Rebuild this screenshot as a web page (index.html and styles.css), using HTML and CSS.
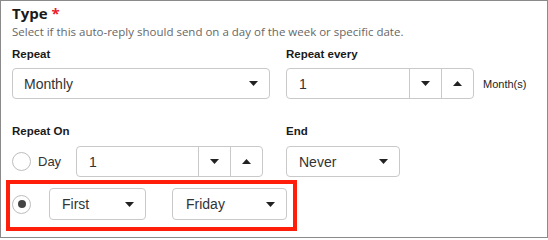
FILE: index.html
```html
<!DOCTYPE html>
<html>
<head>
<meta charset="utf-8">
<link rel="stylesheet" href="styles.css">
</head>
<body>
<div class="frame">
  <div class="title">Type <span class="req">*</span></div>
  <div class="desc">Select if this auto-reply should send on a day of the week or specific date.</div>

  <div class="grid row1">
    <div class="field">
      <div class="label">Repeat</div>
      <div class="select w-full"><span>Monthly</span><svg class="caret" width="9" height="5" viewBox="0 0 9 5"><path d="M0 0H9L4.5 5Z"/></svg></div>
    </div>
    <div class="field">
      <div class="label">Repeat every</div>
      <div class="inline">
        <div class="number w-188">
          <span class="num">1</span>
          <span class="spin"><svg class="caret" width="9" height="5" viewBox="0 0 9 5"><path d="M0 0H9L4.5 5Z"/></svg></span>
          <span class="spin"><svg class="caret" width="9" height="5" viewBox="0 0 9 5"><path d="M0 5H9L4.5 0Z"/></svg></span>
        </div>
        <span class="unit">Month(s)</span>
      </div>
    </div>
  </div>

  <div class="grid row2">
    <div class="field">
      <div class="label">Repeat On</div>
      <div class="inline">
        <span class="radio"></span>
        <span class="radio-text">Day</span>
        <div class="number w-187">
          <span class="num">1</span>
          <span class="spin"><svg class="caret" width="9" height="5" viewBox="0 0 9 5"><path d="M0 0H9L4.5 5Z"/></svg></span>
          <span class="spin"><svg class="caret" width="9" height="5" viewBox="0 0 9 5"><path d="M0 5H9L4.5 0Z"/></svg></span>
        </div>
      </div>
    </div>
    <div class="field">
      <div class="label">End</div>
      <div class="select w-114"><span>Never</span><svg class="caret" width="9" height="5" viewBox="0 0 9 5"><path d="M0 0H9L4.5 5Z"/></svg></div>
    </div>
  </div>

  <div class="highlight">
    <span class="radio checked"></span>
    <div class="select w-97 h32"><span>First</span><svg class="caret" width="9" height="5" viewBox="0 0 9 5"><path d="M0 0H9L4.5 5Z"/></svg></div>
    <div class="select w-115 h32"><span>Friday</span><svg class="caret" width="9" height="5" viewBox="0 0 9 5"><path d="M0 0H9L4.5 5Z"/></svg></div>
  </div>
</div>
</body>
</html>
```

FILE: styles.css
```css
html, body {
  margin: 0;
  padding: 0;
  background: #fff;
}

.frame {
  box-sizing: border-box;
  width: 548px;
  height: 238px;
  border: 1px solid #8a8a8a;
  padding: 2px 0 0 11px;
  font-family: "Liberation Sans", Arial, sans-serif;
  color: #222;
  overflow: hidden;
}

.title {
  font-family: "Open Sans", sans-serif;
  font-weight: 700;
  font-size: 15px;
  line-height: 20px;
  color: #1a1a1a;
}

.req {
  color: #e8202a;
}

.desc {
  font-family: "Open Sans", sans-serif;
  font-size: 11.5px;
  line-height: 16px;
  margin-top: 1px;
  color: #676767;
}

.grid {
  display: grid;
  grid-template-columns: 258px 1fr;
  column-gap: 16px;
}

.row1 {
  margin-top: 7px;
}

.row2 {
  margin-top: 25px;
}

.label {
  font-weight: 700;
  font-size: 11.5px;
  line-height: 14px;
  color: #1a1a1a;
  margin-bottom: 7px;
}

.row2 .label {
  margin-bottom: 8px;
}

.inline {
  display: flex;
  align-items: center;
}

.select {
  box-sizing: border-box;
  height: 31px;
  border: 1px solid #c9c9c9;
  border-radius: 4px;
  display: flex;
  align-items: center;
  justify-content: space-between;
  padding: 0 11px 0 11px;
  font-size: 14px;
  color: #333;
  background: #fff;
}

.h32 {
  height: 32px;
}

.caret {
  display: block;
  fill: #222;
}

.w-full { width: 258px; }
.w-114 { width: 114px; padding-left: 12px; }
.w-97 { width: 97px; padding-left: 12px; }
.w-115 { width: 115px; padding-left: 13px; }
.w-188 { width: 188px; }
.w-187 { width: 187px; }

.number {
  box-sizing: border-box;
  height: 31px;
  border: 1px solid #c9c9c9;
  border-radius: 4px;
  display: flex;
  align-items: stretch;
  font-size: 14px;
  color: #333;
}

.num {
  flex: 1;
  display: flex;
  align-items: center;
  padding-left: 12px;
}

.spin {
  width: 31px;
  border-left: 1px solid #c9c9c9;
  display: flex;
  align-items: center;
  justify-content: center;
}

.unit {
  margin-left: 9px;
  font-size: 11px;
  color: #222;
}

.radio {
  box-sizing: border-box;
  width: 19px;
  height: 19px;
  border: 1px solid #bdbdbd;
  border-radius: 50%;
  background: #fff;
  display: flex;
  align-items: center;
  justify-content: center;
  flex: none;
}

.radio.checked::after {
  content: "";
  width: 8px;
  height: 8px;
  border-radius: 50%;
  background: #444;
}

.radio-text {
  margin-left: 7px;
  font-size: 13px;
  color: #333;
  width: 38px;
}

.highlight {
  box-sizing: border-box;
  width: 291px;
  margin: 3px 0 0 -6px;
  border: 4px solid #ff1e0a;
  padding: 4px 6px 7px 2px;
  display: flex;
  align-items: center;
}

.highlight .w-97 {
  margin-left: 18px;
}

.highlight .w-115 {
  margin-left: 26px;
}
```
